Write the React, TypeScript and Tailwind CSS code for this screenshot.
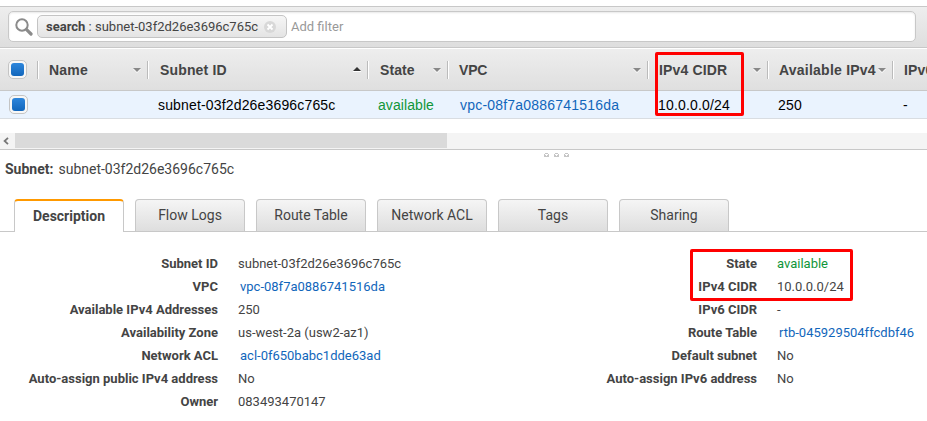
import React from "react";

const ARIAL = "font-['Liberation_Sans',Arial,sans-serif]";

type Column = { label: string; width: string; text: string; sort?: "asc" | "none" };

const columns: Column[] = [
  { label: "Name", width: "w-[110px]", text: "ml-[11px] tracking-[0.2px]", sort: "none" },
  { label: "Subnet ID", width: "w-[220px]", text: "ml-[12px] tracking-[0.15px]", sort: "asc" },
  { label: "State", width: "w-[80px]", text: "ml-[12px] tracking-[0.1px]", sort: "none" },
  { label: "VPC", width: "w-[200px]", text: "ml-[11px] tracking-[-0.2px]", sort: "none" },
  { label: "IPv4 CIDR", width: "w-[120px]", text: "ml-[11px] tracking-[0.15px]", sort: "none" },
  { label: "Available IPv4", width: "w-[125px]", text: "ml-[11px] tracking-[0.23px]", sort: "none" },
  { label: "IPv6 CIDR", width: "w-[120px]", text: "ml-[11px] tracking-[0.15px]" },
];

type Detail = { label: string; value: string; kind?: "link" | "ok" };

const leftDetails: Detail[] = [
  { label: "Subnet ID", value: "subnet-03f2d26e3696c765c" },
  { label: "VPC", value: "vpc-08f7a0886741516da", kind: "link" },
  { label: "Available IPv4 Addresses", value: "250" },
  { label: "Availability Zone", value: "us-west-2a (usw2-az1)" },
  { label: "Network ACL", value: "acl-0f650babc1dde63ad", kind: "link" },
  { label: "Auto-assign public IPv4 address", value: "No" },
  { label: "Owner", value: "083493470147" },
];

const rightDetails: Detail[] = [
  { label: "State", value: "available", kind: "ok" },
  { label: "IPv4 CIDR", value: "10.0.0.0/24" },
  { label: "IPv6 CIDR", value: "-" },
  { label: "Route Table", value: "rtb-045929504ffcdbf46", kind: "link" },
  { label: "Default subnet", value: "No" },
  { label: "Auto-assign IPv6 address", value: "No" },
];

const tabs = ["Flow Logs", "Route Table", "Network ACL", "Tags", "Sharing"];

function Checkbox() {
  return (
    <span className="flex size-[19px] shrink-0 items-center justify-center rounded-[5px] border border-[#c4c4c4] bg-[#f7f7f7]">
      <span className="size-[13px] rounded-[3px] bg-linear-to-b from-[#2d86dc] to-[#1166bb]" />
    </span>
  );
}

function SortArrow({ dir }: { dir: "asc" | "none" }) {
  return dir === "asc" ? (
    <svg width="8" height="5" viewBox="0 0 8 5">
      <path d="M0 4 L4 0 L8 4Z" fill="#333" />
      <path d="M0 4.5H8" stroke="#fff" />
    </svg>
  ) : (
    <svg width="8" height="5" viewBox="0 0 8 5" className="mt-px">
      <path d="M0 1 L4 5 L8 1Z" fill="#fff" />
      <path d="M0 0 L4 4 L8 0Z" fill="#888" />
    </svg>
  );
}

function Details({ items, labelWidth }: { items: Detail[]; labelWidth: string }) {
  return (
    <dl className="text-[13px] leading-[23px]">
      {items.map((d) => (
        <div key={d.label} className="flex h-[23px]">
          <dt className={`${labelWidth} shrink-0 text-right font-bold`}>{d.label}</dt>
          <dd
            className={
              d.kind === "link"
                ? "ml-[22px] whitespace-nowrap text-[#1166bb]"
                : d.kind === "ok"
                  ? "ml-5 whitespace-nowrap text-[#0f9639]"
                  : "ml-5 whitespace-nowrap"
            }
          >
            {d.value}
          </dd>
        </div>
      ))}
    </dl>
  );
}

export default function App() {
  return (
    <div className="relative h-[421px] w-[927px] overflow-hidden bg-white pt-[6px] font-[Roboto,sans-serif] text-[#444]">
      <div className="h-[42px] border-y border-[#c8c8c8] bg-linear-to-b from-[#eeeeee] to-[#dedede] pt-1 pl-2">
        <div className="flex h-[31px] w-[908px] items-center rounded-[5px] border border-[#c8c8c8] bg-white pl-[6px] shadow-[inset_0_1px_2px_#e8e8e8]">
          <svg width="18" height="18" viewBox="0 0 18 18" fill="none" stroke="#8b8b8b" className="mt-px">
            <circle cx="7" cy="7" r="5.7" strokeWidth="2" />
            <path d="M11.6 11.6L16 16" strokeWidth="3.2" strokeLinecap="round" />
          </svg>
          <div className="ml-1 flex h-[23px] w-[250px] items-center rounded-[5px] border border-[#c4c4c4] bg-linear-to-b from-[#f6f6f6] to-[#e4e4e4] pl-2 text-[13px]">
            <span className="whitespace-pre"><b>search</b> : subnet-03f2d26e3696c765c</span>
            <svg width="12" height="12" viewBox="0 0 12 12" className="ml-[6px]">
              <circle cx="6" cy="6" r="6" fill="#d8d8d8" />
              <path d="M3.5 3.5L8.5 8.5M8.5 3.5L3.5 8.5" stroke="#fff" strokeWidth="1.8" />
            </svg>
          </div>
          <span className="ml-[4px] text-[13px] text-[#999]">Add filter</span>
        </div>
      </div>

      <div className={`flex h-[43px] items-center border-b border-[#c8c8c8] bg-linear-to-b from-[#eeeeee] to-[#dfdfdf] pl-2 text-[14px] font-bold shadow-[inset_0_1px_#fff] ${ARIAL}`}>
        <div className="pt-px">
          <Checkbox />
        </div>
        <div className="ml-[10px] flex pt-px">
          {columns.map((c) => (
            <div key={c.label} className={`${c.width} flex h-[18px] shrink-0 items-center border-l border-[#bbb] shadow-[inset_1px_0_#fff]`}>
              <span className={`${c.text} flex-1 pt-px whitespace-nowrap`}>{c.label}</span>
              {c.sort && <span className="mr-[6px] flex"><SortArrow dir={c.sort} /></span>}
            </div>
          ))}
        </div>
      </div>

      <div className={`flex h-[28px] items-center border-b border-[#d9dde2] bg-[#eaf3fe] pl-[9px] text-[14px] leading-[20px] text-black ${ARIAL}`}>
        <Checkbox />
        <div className="ml-[130px] flex pt-px">
          <span className="w-[220px] shrink-0 tracking-[0.16px]">subnet-03f2d26e3696c765c</span>
          <span className="w-[82px] shrink-0 tracking-[0.08px] text-[#0f9639]">available</span>
          <span className="w-[198px] shrink-0 tracking-[0.2px] text-[#1166bb]">vpc-08f7a0886741516da</span>
          <span className="w-[120px] shrink-0 tracking-[0.16px]">10.0.0.0/24</span>
          <span className="w-[125px] shrink-0 tracking-[0.2px]">250</span>
          <span>-</span>
        </div>
      </div>

      <div className="mt-[14px] flex h-[17px] border-b border-[#c8c8c8] bg-[#f4f4f4]">
        <span className="flex h-[15px] w-[15px] items-center justify-center">
          <svg width="6" height="8" viewBox="0 0 6 8" fill="none" stroke="#777" strokeWidth="1.8" className="-ml-[3px]">
            <path d="M5 .8L1.6 4L5 7.2" />
          </svg>
        </span>
        <span className="h-[15px] w-[432px] bg-[#dadada]" />
      </div>
      <div className="flex h-[9px] gap-[5px] pt-[3px] pl-[544px]">
        {[0, 1, 2].map((i) => (
          <svg key={i} width="5" height="4" viewBox="0 0 5 4">
            <path d="M1 0H4V1H5V4H0V1H1Z" fill="#c6c6c6" />
            <path d="M1 1H4V2H3V3H2V2H1Z" fill="#fff" />
          </svg>
        ))}
      </div>

      <div className="flex h-[40px] pl-[5px] text-[14px] leading-[20px]">
        <b>Subnet:</b>
        <span className="ml-[5px]">subnet-03f2d26e3696c765c</span>
      </div>

      <div className="flex h-[33px] items-end border-b border-[#c8c8c8] pl-[14px] text-[14px]">
        <div className="relative -mb-px h-[33px] w-[110px] shrink-0 rounded-t-[4px] border-x border-t-2 border-x-[#c8c8c8] border-t-[#ff9900] bg-white text-center leading-[30px] font-bold">
          Description
        </div>
        {tabs.map((t) => (
          <div key={t} className="ml-[11px] h-[32px] w-[110px] shrink-0 rounded-t-[4px] border border-b-0 border-[#c8c8c8] bg-linear-to-b from-[#f5f5f5] to-[#dedede] text-center leading-[31px]">
            {t}
          </div>
        ))}
      </div>

      <div className="flex pt-[20px]">
        <div className="w-[539px]"><Details items={leftDetails} labelWidth="w-[218px]" /></div>
        <Details items={rightDetails} labelWidth="w-[218px]" />
      </div>

      <div className="absolute top-[52px] left-[655px] h-[64px] w-[89px] rounded-[2px] border-3 border-[#ff0000]" />
      <div className="absolute top-[249px] left-[690px] h-[52px] w-[163px] rounded-[2px] border-3 border-[#ff0000]" />
    </div>
  );
}
